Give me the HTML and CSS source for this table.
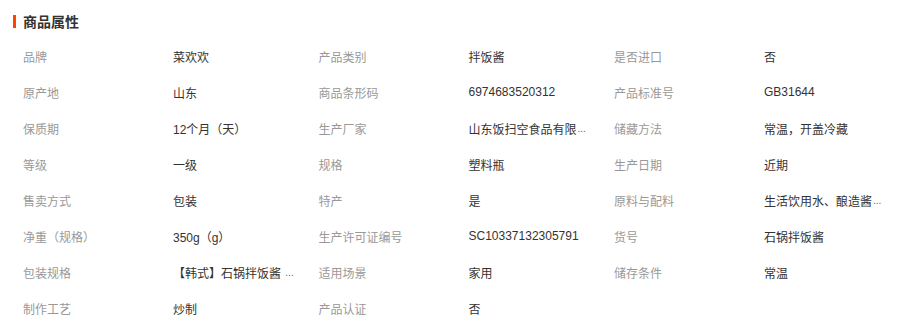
FILE: index.html
```html
<!DOCTYPE html>
<html lang="zh-CN">
<head>
<meta charset="utf-8">
<title>商品属性</title>
<link rel="stylesheet" href="styles.css">
</head>
<body>
<section class="attrs">
  <h2 class="attrs-title"><span class="bar"></span>商品属性</h2>
  <div class="grid">
    <div class="k">品牌</div><div class="v">菜欢欢</div>
    <div class="k">产品类别</div><div class="v">拌饭酱</div>
    <div class="k">是否进口</div><div class="v">否</div>

    <div class="k">原产地</div><div class="v">山东</div>
    <div class="k">商品条形码</div><div class="v">6974683520312</div>
    <div class="k">产品标准号</div><div class="v">GB31644</div>

    <div class="k">保质期</div><div class="v">12个月（天）</div>
    <div class="k">生产厂家</div><div class="v">山东饭扫空食品有限<span class="ell">...</span></div>
    <div class="k">储藏方法</div><div class="v">常温，开盖冷藏</div>

    <div class="k">等级</div><div class="v">一级</div>
    <div class="k">规格</div><div class="v">塑料瓶</div>
    <div class="k">生产日期</div><div class="v">近期</div>

    <div class="k">售卖方式</div><div class="v">包装</div>
    <div class="k">特产</div><div class="v">是</div>
    <div class="k">原料与配料</div><div class="v">生活饮用水、酿造酱<span class="ell">...</span></div>

    <div class="k">净重（规格）</div><div class="v">350g（g）</div>
    <div class="k">生产许可证编号</div><div class="v">SC10337132305791</div>
    <div class="k">货号</div><div class="v">石锅拌饭酱</div>

    <div class="k">包装规格</div><div class="v">【韩式】石锅拌饭酱&nbsp;<span class="ell">...</span></div>
    <div class="k">适用场景</div><div class="v">家用</div>
    <div class="k">储存条件</div><div class="v">常温</div>

    <div class="k">制作工艺</div><div class="v">炒制</div>
    <div class="k">产品认证</div><div class="v">否</div>
    <div class="k"></div><div class="v"></div>
  </div>
</section>
</body>
</html>
```

FILE: styles.css
```css
html, body {
  margin: 0;
  padding: 0;
  background: #fff;
}
body {
  font-family: "Liberation Sans", "Noto Sans CJK SC", sans-serif;
  font-size: 12px;
  color: #333;
}
.attrs {
  padding: 12px 0 0 13px;
}
.attrs-title {
  display: flex;
  align-items: center;
  gap: 7px;
  margin: 0;
  height: 18px;
  line-height: 18px;
  font-size: 14px;
  font-weight: bold;
  color: #333;
  font-family: "Noto Sans CJK SC", sans-serif;
  margin-bottom: 8px;
}
.bar {
  display: block;
  width: 3px;
  height: 13px;
  background: #ff4400;
}
.grid {
  display: grid;
  grid-template-columns: 150px 145.5px 150px 145.5px 150px 145.5px;
  grid-auto-rows: 36px;
}
.k, .v {
  display: flex;
  align-items: center;
  padding-left: 10px;
  white-space: nowrap;
  overflow: hidden;
  font-family: "Liberation Sans", "Noto Sans CJK SC", sans-serif;
}
.k {
  color: #999;
}
.v {
  color: #333;
}
.ell {
  font-size: 10px;
  color: #666;
  margin-left: 1px;
}
```
